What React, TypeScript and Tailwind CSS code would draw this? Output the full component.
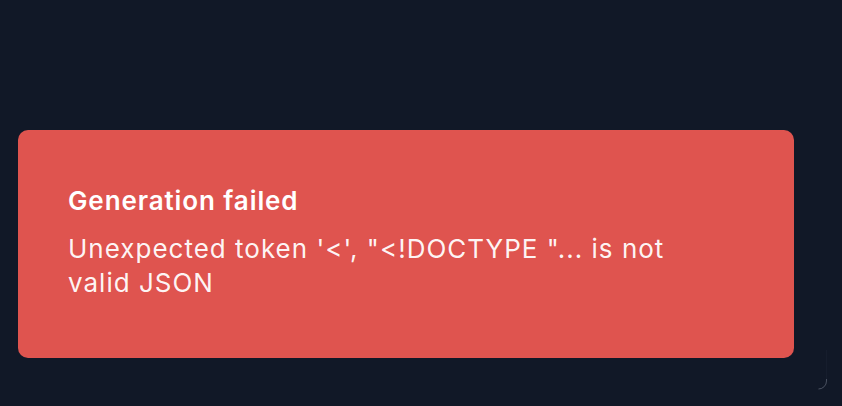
const App = () => {
  return (
    <div className="relative min-h-screen h-[406px] bg-[#111827] font-['Inter',sans-serif] pt-[130px] pl-[18px] pr-[48px] overflow-hidden">
      <div className="bg-[#df544f] rounded-[10px] pl-[50px] pr-[50px] pt-[54px] pb-[58px] text-white">
        <h2 className="text-[26px] leading-[34px] font-semibold tracking-[0.9px]">Generation failed</h2>
        <p className="mt-[14px] text-[26px] leading-[34px] tracking-[1px] max-w-[640px] text-white/95">
          Unexpected token '&lt;', "&lt;!DOCTYPE "... is not valid JSON
        </p>
      </div>
      <svg
        className="absolute left-[812px] top-[350px]"
        width="20"
        height="44"
        viewBox="0 0 20 44"
      >
        <path d="M14.5 0 V31 A8 8 0 0 1 6.5 39" fill="none" stroke="#161d2d" strokeWidth="1" />
        <path d="M14.5 29 V31 A8 8 0 0 1 6.5 39" fill="none" stroke="#6b7280" strokeWidth="1" opacity="0.6" />
      </svg>
    </div>
  );
};

export default App;
